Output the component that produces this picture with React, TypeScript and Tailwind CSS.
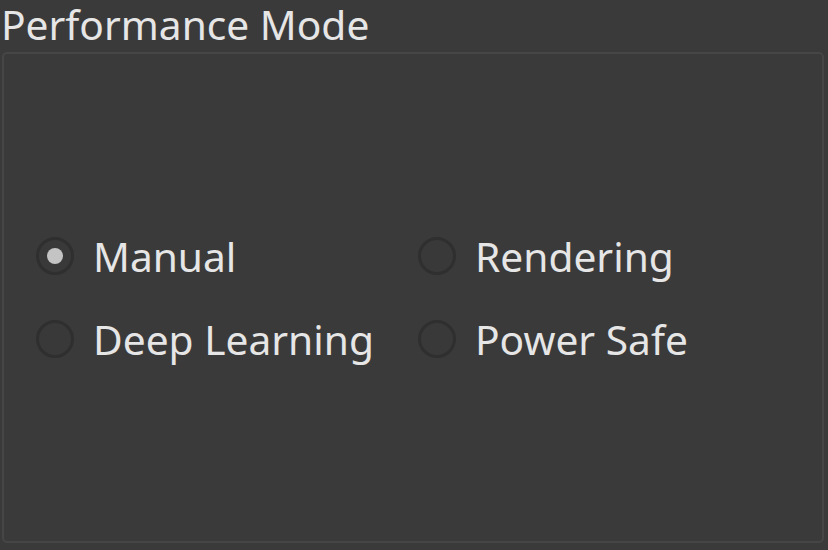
import React from "react";

const Radio = ({ checked, label }: { checked?: boolean; label: string }) => (
  <div className="flex items-center h-[40px]">
    <div className="w-[38px] h-[38px] rounded-full border-[3px] border-[#2f2f2f] bg-[#393939] flex items-center justify-center shrink-0">
      {checked && <div className="w-[16px] h-[16px] rounded-full bg-[#c4c4c4]" />}
    </div>
    <span className="ml-[19px] text-[40.7px] leading-none text-[#e6e6e6]">{label}</span>
  </div>
);

export default function App() {
  return (
    <div
      className="w-[828px] h-[550px] bg-[#3a3a3a] flex flex-col overflow-hidden"
      style={{ fontFamily: '"Noto Sans", "DejaVu Sans", sans-serif' }}
    >
      <div className="h-[52px] pl-[1px] pt-[1px] text-[40.7px] leading-[46px] text-[#e6e6e6] whitespace-nowrap">
        Performance Mode
      </div>
      <div className="ml-[2px] mr-[4px] h-[491px] border-2 border-[#464646] rounded-[5px] flex items-center">
        <div className="grid grid-cols-[382px_1fr] gap-y-[43px] pl-[32px] w-full">
          <Radio checked label="Manual" />
          <Radio label="Rendering" />
          <Radio label="Deep Learning" />
          <Radio label="Power Safe" />
        </div>
      </div>
    </div>
  );
}
